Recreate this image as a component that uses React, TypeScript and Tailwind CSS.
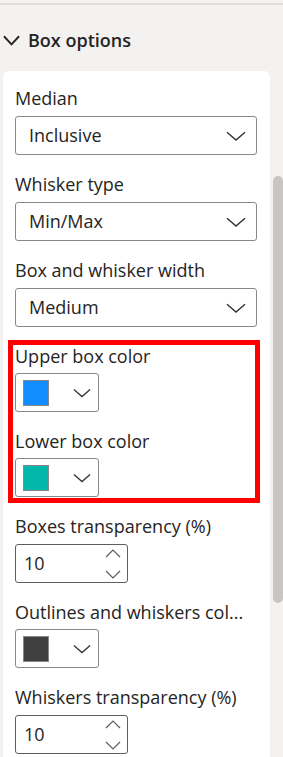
import React from "react";

const font = { fontFamily: '"Segoe UI", "Open Sans", "Noto Sans", sans-serif' };

function Chevron({ className }: { className?: string }) {
  return (
    <svg viewBox="0 0 20 10" className={className} fill="none" stroke="#323130" strokeWidth="1.4">
      <path d="M1 1.2 L10 9 L19 1.2" />
    </svg>
  );
}

function Label({ children }: { children: React.ReactNode }) {
  return <div className="h-[22px] leading-[22px] text-[18px] text-[#252423] whitespace-nowrap">{children}</div>;
}

function Dropdown({ label, value }: { label: string; value: string }) {
  return (
    <div className="flex flex-col gap-[7px]">
      <Label>{label}</Label>
      <div className="h-[39px] w-[242px] border border-[#8a8886] rounded-[3px] flex items-center justify-between pl-[13px] pr-[10px]">
        <span className="text-[18px] text-[#252423]">{value}</span>
        <Chevron className="w-[20px] h-[10px]" />
      </div>
    </div>
  );
}

function ColorPick({ label, color }: { label: string; color: string }) {
  return (
    <div className="flex flex-col gap-[6px]">
      <Label>{label}</Label>
      <div className="h-[39px] w-[84px] border border-[#8a8886] rounded-[3px] flex items-center pl-[7px]">
        <div className="w-[26px] h-[26px] border border-[#8a8886]" style={{ backgroundColor: color }} />
        <Chevron className="w-[18px] h-[10px] ml-[24px]" />
      </div>
    </div>
  );
}

function Spin({ label, value }: { label: string; value: string }) {
  return (
    <div className="flex flex-col gap-[7px]">
      <Label>{label}</Label>
      <div className="h-[39px] w-[113px] border border-[#605e5c] rounded-[3px] flex items-center justify-between pl-[8px] pr-[6px]">
        <span className="text-[18px] text-[#252423]">{value}</span>
        <div className="flex flex-col gap-[12px]">
          <svg viewBox="0 0 16 9" className="w-[16px] h-[9px]" fill="none" stroke="#605e5c" strokeWidth="1.2">
            <path d="M1 8 L8 1 L15 8" />
          </svg>
          <svg viewBox="0 0 16 9" className="w-[16px] h-[9px]" fill="none" stroke="#605e5c" strokeWidth="1.2">
            <path d="M1 1 L8 8 L15 1" />
          </svg>
        </div>
      </div>
    </div>
  );
}

export default function App() {
  return (
    <div className="w-[283px] h-[757px] bg-[#f3f2f1] overflow-hidden flex flex-col" style={font}>
      <div className="mt-[3px] h-[2px] bg-[#e1dfdd]" />
      {/* Section header */}
      <div className="h-[66px] flex items-center pl-[3px] pt-[4px]">
        <svg viewBox="0 0 18 11" className="w-[17px] h-[11px]" fill="none" stroke="#252423" strokeWidth="2">
          <path d="M1 1 L9 9.5 L17 1" />
        </svg>
        <span className="ml-[8px] text-[18px] font-semibold text-[#252423]">Box options</span>
      </div>

      <div className="flex flex-1">
        {/* Card */}
        <div className="ml-[3px] w-[267px] bg-white rounded-t-[6px] pt-[16px] px-[12px] flex flex-col gap-[18px]">
          <Dropdown label="Median" value="Inclusive" />
          <Dropdown label="Whisker type" value="Min/Max" />
          <Dropdown label="Box and whisker width" value="Medium" />
          <div className="relative flex flex-col gap-[18px]">
            <ColorPick label="Upper box color" color="#118dff" />
            <ColorPick label="Lower box color" color="#01b8aa" />
            <div className="absolute left-[-7px] right-[-2px] top-[-5px] bottom-[-6px] border-[5px] border-[#ff0000] pointer-events-none" />
          </div>
          <Spin label="Boxes transparency (%)" value="10" />
          <ColorPick label="Outlines and whiskers col..." color="#404040" />
          <Spin label="Whiskers transparency (%)" value="10" />
        </div>
        {/* Scrollbar */}
        <div className="w-[13px] pl-[3px]">
          <div className="mt-[105px] h-[427px] w-[10px] rounded-[5px] bg-[#c8c6c4]" />
        </div>
      </div>
    </div>
  );
}
